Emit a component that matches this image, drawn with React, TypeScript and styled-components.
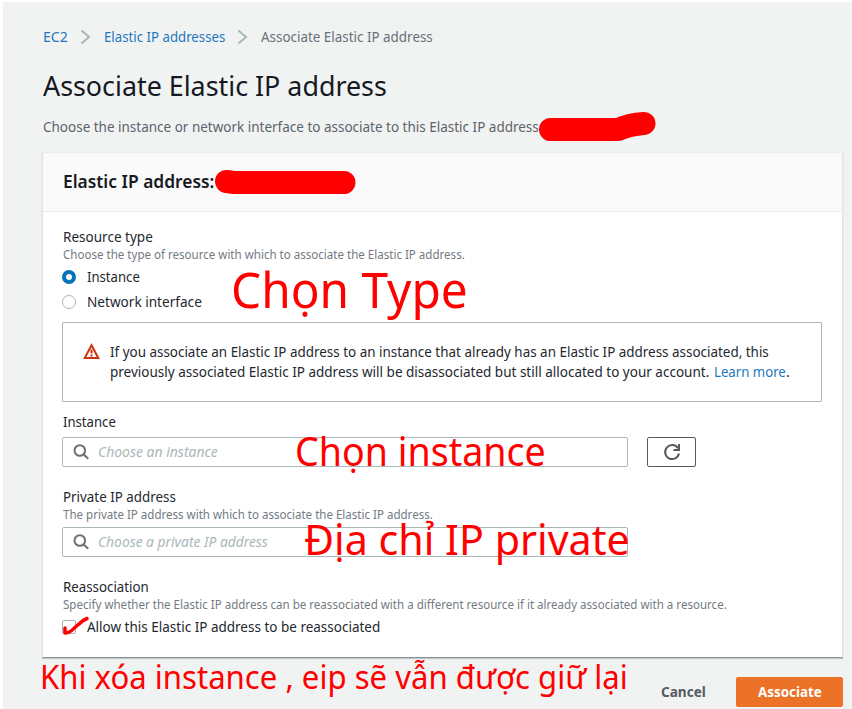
import React, { useLayoutEffect, useRef, useState } from "react";
import styled, { createGlobalStyle } from "styled-components";

const GlobalStyle = createGlobalStyle`
  * { box-sizing: border-box; }
  body { margin: 0; background: #fff; overflow: hidden; font-family: "Noto Sans", "Open Sans", sans-serif; }
  h1, h2, p { margin: 0; font-weight: inherit; font-size: inherit; }
`;

const Frame = styled.div`
  position: relative;
  width: 852px;
  height: 709px;
  padding: 2px 0 0 3px;
  overflow: hidden;
`;
const Page = styled.main`
  height: 707px;
  padding: 25px 9px 0 39px;
  background: #f1f3f3;
  color: #24282e;
  font-size: 14px;
  line-height: 20px;
`;

const FitBox = styled.span<{ $w: number }>`
  display: inline-block;
  vertical-align: top;
  width: ${(p) => p.$w}px;
  padding-left: 0.6px;
  white-space: nowrap;
  text-align: left;
`;
const FitInner = styled.span`
  display: inline-block;
  vertical-align: top;
  transform-origin: 0 0;
`;

/** Single line of text condensed or widened to an exact width. */
function Fit({ w, children }: { w: number; children: React.ReactNode }) {
  const ref = useRef<HTMLSpanElement>(null);
  const [scale, setScale] = useState(1);
  useLayoutEffect(() => {
    const el = ref.current;
    if (!el) return;
    const measure = () => setScale((w - 1.2) / parseFloat(getComputedStyle(el).width));
    measure();
    document.fonts?.ready.then(measure);
  }, [w]);
  return (
    <FitBox $w={w}>
      <FitInner ref={ref} style={{ transform: `scaleX(${scale})` }}>{children}</FitInner>
    </FitBox>
  );
}

const Breadcrumbs = styled.nav`
  display: flex;
  height: 20px;
  color: #687078;
`;
const Link = styled.a`
  color: #1f78be;
  text-decoration: none;
`;
const Chevron = styled.svg`
  margin: 2px 12.5px 0 11.5px;
  width: 11px;
  height: 16px;
  fill: none;
  stroke: #aab7b8;
  stroke-width: 2;
`;
const Title = styled.h1`
  margin-top: 20px;
  height: 36px;
  color: #16191f;
  font-size: 28px;
  line-height: 36px;
`;
const Subtitle = styled.p`
  margin-top: 14px;
  height: 20px;
  color: #5c636b;
`;
const Card = styled.section`
  margin-top: 15px;
  height: 506px;
  background: #fff;
  border-top: 1px solid #eaeded;
  border-left: 1px solid #dfe3e3;
  border-right: 1px solid #dfe3e3;
  border-bottom: 1px solid #879596;
  box-shadow: 0 1px 1px rgba(0, 28, 36, 0.2);
`;
const CardHeader = styled.header`
  height: 59px;
  padding: 17px 20px 0 19.5px;
  background: #fafafa;
  border-bottom: 1px solid #eaeded;
  color: #16191f;
  font-size: 18px;
  line-height: 22px;
  font-weight: 600;
`;
const CardBody = styled.div`
  padding: 15px 20px 0 19px;
`;
const Field = styled.div<{ $gap?: number }>`
  margin-top: ${(p) => p.$gap ?? 0}px;
`;
const Label = styled.div`
  height: 20px;
`;
const Hint = styled.div`
  height: 16px;
  margin-bottom: 4px;
  color: #737b83;
  font-size: 12px;
  line-height: 16px;
`;
const Option = styled.label<{ $top?: number }>`
  display: flex;
  align-items: center;
  gap: 10px;
  height: 20px;
  margin-top: ${(p) => p.$top ?? 0}px;
`;
const Radio = styled.span<{ $on?: boolean }>`
  width: 14px;
  height: 14px;
  border-radius: 50%;
  background: #fff;
  border: ${(p) => (p.$on ? "4.5px solid #0073bb" : "1px solid #aab7b8")};
`;
const Checkbox = styled.span`
  width: 14px;
  height: 14px;
  background: #fff;
  border: 1px solid #aab7b8;
  border-radius: 2px;
`;
const Alert = styled.div`
  display: flex;
  gap: 10px;
  height: 80px;
  margin-top: 10px;
  padding: 19px 19px 0 20px;
  border: 1px solid #aab7b8;
  border-radius: 1px;
`;
const AlertIcon = styled.svg`
  width: 17px;
  height: 16px;
  margin: 1px -1px 0 0;
  fill: none;
  stroke: #d13212;
  stroke-width: 2;
`;
const AlertText = styled.div`
  display: grid;
  grid-template-rows: 20px 20px;
`;
const AlertLine = styled.div`
  display: flex;
`;
const InputRow = styled.div<{ $top?: number }>`
  display: flex;
  gap: 19px;
  margin-top: ${(p) => p.$top ?? 0}px;
`;
const Input = styled.div`
  display: flex;
  align-items: center;
  gap: 8px;
  width: 566px;
  height: 30px;
  padding-left: 10px;
  border: 1px solid #aab7b8;
  border-radius: 2px;
  color: #aab7b8;
  font-style: italic;
`;
const SearchIcon = styled.svg`
  width: 16px;
  height: 16px;
  fill: none;
  stroke: #687078;
  stroke-width: 2;
`;
const RefreshIcon = styled.svg`
  width: 18px;
  height: 18px;
  fill: none;
  stroke: #545b64;
  stroke-width: 2;
`;
const RefreshButton = styled.button`
  display: grid;
  place-items: center;
  width: 49px;
  height: 30px;
  padding: 0;
  background: #fff;
  border: 1px solid #545b64;
  border-radius: 2px;
`;
const Footer = styled.footer`
  display: flex;
  justify-content: flex-end;
  align-items: center;
  gap: 30px;
  height: 30px;
  margin-top: 19px;
  color: #545b64;
  font-weight: 700;
`;
const Primary = styled.button`
  width: 107px;
  height: 30px;
  padding: 0;
  border: 0;
  border-radius: 2px;
  background: #eb7226;
  color: #fff;
  font: inherit;
`;

/* Red mark-up drawn over the form. */
const Note = styled.div<{ $x: number; $y: number; $size: number; $line: number }>`
  position: absolute;
  left: ${(p) => p.$x}px;
  top: ${(p) => p.$y}px;
  font-size: ${(p) => p.$size}px;
  line-height: ${(p) => p.$line}px;
  color: #f00;
`;
const Ink = styled.svg`
  position: absolute;
  left: 0;
  top: 0;
  width: 852px;
  height: 709px;
  fill: none;
  stroke: #f00;
  stroke-linecap: round;
  stroke-linejoin: round;
  pointer-events: none;
`;

const Separator = () => (
  <Chevron viewBox="0 0 11 16"><path d="M1.500 1.500 9 8l-7.500 6.500" /></Chevron>
);
const Search = () => (
  <SearchIcon viewBox="0 0 16 16"><circle cx="6.800" cy="6.500" r="5.300" /><path d="m10.500 10.200 4.700 4.500" /></SearchIcon>
);

export default function App() {
  return (
    <Frame>
      <GlobalStyle />
      <Page>
        <Breadcrumbs>
          <Link><Fit w={26}>EC2</Fit></Link>
          <Separator />
          <Link><Fit w={122.5}>Elastic IP addresses</Fit></Link>
          <Separator />
          <Fit w={173}>Associate Elastic IP address</Fit>
        </Breadcrumbs>
        <Title><Fit w={345}>Associate Elastic IP address</Fit></Title>
        <Subtitle>
          <Fit w={497}>Choose the instance or network interface to associate to this Elastic IP address</Fit>
        </Subtitle>
        <Card>
          <CardHeader><Fit w={152.5}>Elastic IP address:</Fit></CardHeader>
          <CardBody>
            <Field>
              <Label><Fit w={91}>Resource type</Fit></Label>
              <Hint><Fit w={403}>Choose the type of resource with which to associate the Elastic IP address.</Fit></Hint>
              <Option><Radio $on /><Fit w={54}>Instance</Fit></Option>
              <Option $top={5}><Radio /><Fit w={116}>Network interface</Fit></Option>
            </Field>
            <Alert>
              <AlertIcon viewBox="0 0 17 16">
                <path d="M8.500 2.200 1.700 15h13.600z" /><path d="M8.500 6.500v4M8.500 11.500v2" />
              </AlertIcon>
              <AlertText>
                <AlertLine>
                  <Fit w={660}>If you associate an Elastic IP address to an instance that already has an Elastic IP address associated, this</Fit>
                </AlertLine>
                <AlertLine>
                  <Fit w={604}>previously associated Elastic IP address will be disassociated but still allocated to your account.&nbsp;</Fit>
                  <Link><Fit w={73}>Learn more</Fit></Link>.
                </AlertLine>
              </AlertText>
            </Alert>
            <Field $gap={10}>
              <Label><Fit w={54}>Instance</Fit></Label>
              <InputRow $top={5}>
                <Input><Search /><Fit w={121}>Choose an instance</Fit></Input>
                <RefreshButton>
                  <RefreshIcon viewBox="0 0 18 18">
                    <path d="M15 5.200A7 7 0 1 0 16 10.500" /><path d="M16 1v6h-5.500" />
                  </RefreshIcon>
                </RefreshButton>
              </InputRow>
            </Field>
            <Field $gap={20}>
              <Label><Fit w={114}>Private IP address</Fit></Label>
              <Hint><Fit w={371}>The private IP address with which to associate the Elastic IP address.</Fit></Hint>
              <InputRow><Input><Search /><Fit w={171}>Choose a private IP address</Fit></Input></InputRow>
            </Field>
            <Field $gap={20}>
              <Label><Fit w={87}>Reassociation</Fit></Label>
              <Hint><Fit w={665}>Specify whether the Elastic IP address can be reassociated with a different resource if it already associated with a resource.</Fit></Hint>
              <Option><Checkbox /><Fit w={294.5}>Allow this Elastic IP address to be reassociated</Fit></Option>
            </Field>
          </CardBody>
        </Card>
        <Footer>
          <Fit w={46}>Cancel</Fit>
          <Primary><Fit w={65}>Associate</Fit></Primary>
        </Footer>
      </Page>
      <Note $x={230} $y={264} $size={49} $line={50}><Fit w={238}>Chọn Type</Fit></Note>
      <Note $x={294} $y={431} $size={39.5} $line={40}><Fit w={252}>Chọn instance</Fit></Note>
      <Note $x={303} $y={519} $size={41.5} $line={40}><Fit w={327}>Địa chỉ IP private</Fit></Note>
      <Note $x={39.5} $y={662} $size={32} $line={30}><Fit w={589}>Khi xóa instance , eip sẽ vẫn được giữ lại</Fit></Note>
      <Ink viewBox="0 0 852 709">
        <path strokeWidth="23" d="M550.500 129.500H618Q629 124.500 644 123.500" />
        <path strokeWidth="23" d="M226.500 181.500 234 182.500H344" />
        <path strokeWidth="3.500" d="M65 628v5c6 1 9-6 14-9q4-4 8-5.500" />
      </Ink>
    </Frame>
  );
}
